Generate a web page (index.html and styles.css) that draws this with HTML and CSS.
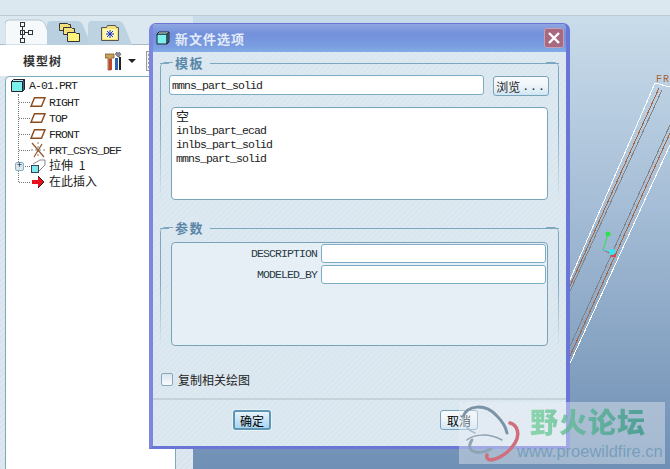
FILE: index.html
```html
<!DOCTYPE html>
<html lang="zh">
<head>
<meta charset="utf-8">
<title>新文件选项</title>
<link rel="stylesheet" href="styles.css">
</head>
<body>
<div class="app">
  <aside class="side">
    <div class="tabs">
      <svg class="tab" width="48" height="26" viewBox="0 0 48 26"><path d="M0 26V5q0-4 4-4h30q4 0 6 4l8 21z" fill="#f6f9fb" stroke="#b4c6d2"/><g fill="none" stroke="#333" stroke-width="1"><rect x="15.500" y="3.500" width="4" height="4"/><rect x="15.500" y="11.500" width="4" height="4"/><rect x="15.500" y="19.500" width="4" height="4"/><rect x="23.500" y="11.500" width="4" height="4"/><path d="M17.500 7.500v12M19.500 13.500h4"/></g></svg>
      <svg class="tab tab2" width="46" height="25" viewBox="0 0 46 25"><path d="M0 25V5q0-4 4-4h26q4 0 6 4l8 20z" fill="#b9d0e0"/><g stroke="#333" fill="#f4df7a"><path d="M12.500 8.500v-5h8l1 1h2v6h-11z"/><path d="M16.500 12.500v-5h8l1 1h2v6h-11z"/><path d="M20.500 16.500v-4h8l1 1h3v8h-12z" fill="#fff27c"/></g></svg>
      <svg class="tab tab3" width="46" height="25" viewBox="0 0 46 25"><path d="M0 25V5q0-4 4-4h26q4 0 6 4l8 20z" fill="#bdd3e2"/><path d="M13.500 20.500v-13h5l1-2h8l1 2h2v13z" fill="#f6e27c" stroke="#555"/><rect x="15" y="9" width="14" height="10" fill="#fff9b0"/><path d="M22 10v8M18 14h8M19 11l6 6M25 11l-6 6" stroke="#1a2fd0"/></svg>
    </div>
    <div class="panel">
      <div class="treehead">
        <span class="treetitle">模型树</span>
        <svg class="tools" width="18" height="20" viewBox="0 0 18 20"><path d="M0 3h9v4H6v12H3V7H0z" fill="#c9a15a" stroke="#6b4a20" stroke-width=".7"/><rect x="4" y="8" width="3" height="11" fill="#c6442e"/><rect x="10" y="7" width="3" height="12" fill="#2b62b8"/><path d="M14 1l2 2-2 3h-1l-3-3 2-2 1 2z" fill="#8a8f96" stroke="#444" stroke-width=".5"/><rect x="14" y="6" width="2" height="13" fill="#222"/></svg>
        <span class="caret"></span>
        <svg class="listbtn" width="11" height="20" viewBox="0 0 11 20"><rect x=".5" y=".5" width="10" height="19" fill="#f3f3ee" stroke="#999"/><path d="M2 4h6M2 8h6M2 12h6M2 16h6" stroke="#444" stroke-dasharray="1 1"/></svg>
      </div>
      <div class="treebox">
        <div class="root">
          <svg class="ico" width="14" height="13" viewBox="0 0 14 13"><path d="M.5 2.500h11v10H.5z" fill="#7ef0ec" stroke="#223"/><path d="M11.500 2.500l2-2v10l-2 2z" fill="#2f6f76" stroke="#223"/><path d="M.5 2.500l2-2h11l-2 2z" fill="#bfeef0" stroke="#223"/></svg>
          <span class="mono">A-01.PRT</span>
        </div>
        <ul class="tree">
          <li class="node"><svg class="ico" width="16" height="10" viewBox="0 0 16 10"><path d="M4.500.8H15l-3.500 8.400H1z" fill="none" stroke="#8d4d22" stroke-width="1.500"/></svg><span class="mono">RIGHT</span></li>
          <li class="node"><svg class="ico" width="16" height="10" viewBox="0 0 16 10"><path d="M4.500.8H15l-3.500 8.400H1z" fill="none" stroke="#8d4d22" stroke-width="1.500"/></svg><span class="mono">TOP</span></li>
          <li class="node"><svg class="ico" width="16" height="10" viewBox="0 0 16 10"><path d="M4.500.8H15l-3.500 8.400H1z" fill="none" stroke="#8d4d22" stroke-width="1.500"/></svg><span class="mono">FRONT</span></li>
          <li class="node"><svg class="ico" width="16" height="16" viewBox="0 0 16 16"><path d="M2 1l12 14M12 2L4 15" stroke="#9a5a30" stroke-width="1.300"/><path d="M8 0v15M1 8h15" stroke="#666" stroke-dasharray="2 2" stroke-width=".8"/></svg><span class="mono">PRT_CSYS_DEF</span></li>
          <li class="node">
            <span class="plus">+</span>
            <svg class="ico" width="16" height="14" viewBox="0 0 16 14"><rect x="1.500" y="6.500" width="7" height="7" fill="#7eeaf0" stroke="#345"/><path d="M3 5l7-4h5v5l-6 6" fill="none" stroke="#888"/></svg><span class="cjk nudge">拉伸 1</span>
          </li>
          <li class="node"><svg class="ico" width="16" height="12" viewBox="0 0 16 12"><path d="M2 4h6V0l6 6-6 6V8H2z" fill="#e8101a"/><path d="M8 0l6 6-6 6" fill="none" stroke="#222"/></svg><span class="cjk nudge">在此插入</span></li>
        </ul>
      </div>
    </div>
  </aside>
  <main class="view">
    <svg class="model" width="477" height="454" viewBox="193 15 477 454">
      <g fill="none" shape-rendering="crispEdges">
        <path d="M655 83L566 289M655 83l15 4M670 145L566 372" stroke="#fff"/>
        <path d="M659 88L566 295M670 133L566 365" stroke="#a8643a"/>
        <path d="M662 90L566 300M670 125L566 355" stroke="#808488"/>
      </g>
      <text x="656" y="82" class="frontlabel">FR</text>
      <path d="M608 234l-5 16" fill="none" stroke="#2de24a"/>
      <path d="M603 250l9 4" fill="none" stroke="#e0304a"/>
      <path d="M603 250l9 2" fill="none" stroke="#35e6ec"/>
      <circle cx="608" cy="234" r="2.500" fill="#2de24a"/>
      <rect x="611" y="254" width="5" height="3" fill="#d64c4c"/>
      <circle cx="612" cy="252" r="3" fill="#35e6ec"/>
    </svg>
  </main>
</div>

<section class="dialog">
  <header class="titlebar">
    <svg class="titleicon" width="14" height="14" viewBox="0 0 14 14"><path d="M1 3h10v10H1z" fill="#7ef0ec" stroke="#223"/><path d="M11 3l2-2v10l-2 2z" fill="#3a7f86" stroke="#223"/><path d="M1 3l2-2h10l-2 2z" fill="#cfe" stroke="#223"/></svg>
    <h1 class="titletext">新文件选项</h1>
    <span class="close"><svg width="12" height="12" viewBox="0 0 12 12"><path d="M1 1l10 10M11 1L1 11" stroke="#fff" stroke-width="2.400"/></svg></span>
  </header>
  <div class="body">
    <fieldset class="group tpl">
      <legend class="legend">模板</legend>
      <div class="pathrow">
        <div class="field wide mono">mmns_part_solid</div>
        <button class="btn browse"><span class="cjk">浏览</span><span class="mono dots">...</span></button>
      </div>
      <div class="list">
        <div class="item cjk">空</div>
        <div class="item mono">inlbs_part_ecad</div>
        <div class="item mono">inlbs_part_solid</div>
        <div class="item mono">mmns_part_solid</div>
      </div>
    </fieldset>
    <fieldset class="group params">
      <legend class="legend">参数</legend>
      <div class="paramsbox">
        <div class="param"><label class="plabel mono">DESCRIPTION</label><div class="field pinput"></div></div>
        <div class="param"><label class="plabel mono">MODELED_BY</label><div class="field pinput"></div></div>
      </div>
    </fieldset>
    <div class="copy"><span class="check"></span><span class="cjk">复制相关绘图</span></div>
    <div class="actions">
      <button class="btn ok cjk">确定</button>
      <button class="btn cancel cjk">取消</button>
    </div>
  </div>
</section>

<div class="wm">
  <svg class="wmlogo" width="62" height="62" viewBox="0 0 62 62"><g fill="none" stroke-linecap="round"><path d="M4 15C8 3 26 1 38 14c6 6 9 12 10 17" stroke="#7a93a6" stroke-width="3"/><path d="M4 15c0 8 6 14 12 16" stroke="#a9bac6" stroke-width="1.500"/><path d="M51 21c8 2 10 12 5 20-5 8-14 15-24 17-3 0-5-2-4-5" stroke="#cf6f7c" stroke-width="3.500"/><path d="M8 38c6-5 20-8 35 0" stroke="#8ea3b3" stroke-width="1.500"/><path d="M13 38c-4 6-3 11 4 12 5 1 11-1 15-3" stroke="#8ea3b3" stroke-width="3"/></g></svg>
  <div class="wmtext">
    <div class="wmcn">野火论坛</div>
    <div class="wmurl">www.proewildfire.cn</div>
  </div>
</div>
</body>
</html>
```
FILE: styles.css
```css
* { box-sizing: border-box; }
html, body { margin: 0; padding: 0; }
body {
  width: 670px; height: 469px; overflow: hidden; position: relative;
  background: #dce8f0;
  font-family: "Noto Sans CJK SC", sans-serif; color: #1a1a1a;
}
.mono { font-family: "Liberation Mono", monospace; font-size: 11.500px; letter-spacing: -.9px; color: #222; }
.cjk { font-family: "Noto Sans CJK SC", sans-serif; font-size: 12px; color: #222; }
.nudge { margin-bottom: 4px; word-spacing: 3px; }

.app { display: flex; height: 469px; padding-top: 15px; }
.side { width: 193px; display: flex; flex-direction: column; }
.tabs {
  height: 30px; display: flex; align-items: flex-end; padding-left: 5px;
  background: #dce8f0; border-top: 1px solid #bcccd6; border-bottom: 1px solid #a9bcc9;
}
.tab { display: block; margin-bottom: -1px; flex: none; }
.tab2 { margin-left: -6px; }
.tab3 { margin-left: -5px; }
.panel {
  flex: 1; display: flex; flex-direction: column;
  background: #fff repeating-linear-gradient(135deg, #dde8f0 0 2px, #d7e4ed 2px 4px);
}
.treehead { height: 31px; display: flex; align-items: center; background: #fff; padding-left: 23px; width: 176px; }
.treetitle { font-size: 12px; font-weight: 700; letter-spacing: 1px; width: 82px; color: #333; }
.tools { flex: none; }
.caret { width: 0; height: 0; border: 4px solid transparent; border-top: 4px solid #222; border-bottom: 0; margin: 0 10px 0 5px; }
.listbtn { flex: none; }
.treebox {
  flex: 1; margin-left: 5px; width: 171px; background: #fff;
  border: 1px solid #80a8bd; border-bottom: 0; border-top-left-radius: 5px; border-top-right-radius: 5px;
  position: relative;
}
.root { height: 17px; display: flex; align-items: center; padding-left: 5px; gap: 4px; }
.tree { list-style: none; margin: 0 0 0 12px; padding: 0; border-left: 1px dotted #777; height: 88px; }
.node { height: 16px; display: flex; align-items: center; position: relative; padding-left: 11px; gap: 3px; }
.node::before { content: ""; position: absolute; left: 0; top: 8px; width: 11px; border-top: 1px dotted #777; }
.ico { flex: none; position: relative; }
.plus {
  position: absolute; left: -4px; top: 4px; width: 9px; height: 9px; z-index: 1;
  background: #d8e8f2; border: 1px solid #8fb0c4; border-radius: 2px;
  font: 9px/7px "Liberation Mono", monospace; text-align: center; color: #111;
}

.view {
  flex: 1; position: relative;
  background: linear-gradient(#c9dcea 0, #a5bdd6 42%, #7c9abc 85%, #7090b5 100%);
  border-top: 1px solid #bcccd6;
}
.model { position: absolute; left: 0; top: -1px; }
.frontlabel { font: 10px "Liberation Mono", monospace; fill: #a8643a; letter-spacing: 1px; }

.dialog {
  position: absolute; left: 149px; top: 23px; width: 421px; height: 426px;
  border: solid #6a76d6; border-width: 1px 4px 3px 4px; border-radius: 7px 7px 0 0;
  border-left-color: #7b87de;
  display: flex; flex-direction: column;
  background: repeating-linear-gradient(135deg, #dde9f1 0 2px, #d9e6ef 2px 4px);
}
.titlebar {
  height: 28px; flex: none; display: flex; align-items: center; padding: 0 2px 0 3px;
  background: linear-gradient(#8ea6e0 0, #7390dc 35%, #7a9de0 80%, #82ace8 100%);
  border-radius: 4px 4px 0 0;
}
.titleicon { flex: none; }
.titletext { margin: 0 0 0 5px; flex: 1; font-size: 13px; font-weight: 700; letter-spacing: 1px; color: #e2ebf8; }
.close {
  width: 20px; height: 20px; display: flex; align-items: center; justify-content: center;
  background: #a8687f; border: 1px solid #c6a0b6; border-radius: 3px;
}
.body { flex: 1; padding: 3px 7px 0; display: flex; flex-direction: column; }
.group {
  margin: 0; padding: 0; min-width: 0; width: 399px; position: relative;
  border: 0; border-top: 1px solid #7da7c0;
}
.group::before, .group::after {
  content: ""; position: absolute; top: -9px; bottom: 0; width: 12px;
  border-top: 1px solid #7da7c0;
  -webkit-mask-image: linear-gradient(#000 45%, transparent);
  mask-image: linear-gradient(#000 45%, transparent);
}
.group::before { left: 0; border-left: 1px solid #7da7c0; border-top-left-radius: 5px; }
.group::after { right: 0; border-right: 1px solid #7da7c0; border-top-right-radius: 5px; }
.tpl { height: 157px; }
.params { height: 132px; margin-top: 8px; }
.legend { margin-left: 9px; padding: 0 6px; font-size: 13px; line-height: 16px; font-weight: 700; letter-spacing: 1.500px; color: #5a86a8; }
.pathrow { display: flex; padding: 4px 0 0 9px; gap: 9px; }
.field { background: #fff; border: 1px solid #7dacc4; border-radius: 3px; height: 20px; display: flex; align-items: center; padding-left: 2px; }
.wide { width: 315px; }
.btn {
  padding: 0; height: 20px; border: 1px solid #7aa2b8; border-radius: 3px;
  background: linear-gradient(#f8fbfd, #eef5fa 50%, #cfe6f5);
  display: flex; align-items: center; justify-content: center;
}
.browse { width: 56px; margin-top: 1px; }
.dots { letter-spacing: 1px; margin-left: 2px; }
.list {
  margin: 11px 0 0 11px; width: 377px; height: 93px; background: #fff;
  border: 1px solid #7ba3b8; border-radius: 4px; padding: 1px 4px;
}
.item { height: 14px; line-height: 14px; display: block; }
.item.cjk { height: 15px; font-size: 13px; }
.paramsbox {
  margin: 6px 0 0 11px; width: 377px; height: 104px; background: #e6eff6;
  border: 1px solid #7ba3b8; border-radius: 4px; padding: 1px;
  display: flex; flex-direction: column; gap: 2px;
}
.param { display: flex; align-items: center; justify-content: flex-end; gap: 4px; }
.plabel { color: #2a3a44; }
.pinput { width: 225px; height: 19px; }
.copy { display: flex; align-items: center; gap: 5px; margin: 21px 0 0 1px; height: 13px; }
.check { width: 12px; height: 13px; background: linear-gradient(#dce6ee, #f7fafc); border: 1px solid #8aa8bc; border-radius: 2px; }
.actions {
  margin: 12px -7px 0; height: 48px; border-top: 2px solid #c5d2da;
  display: flex; padding: 10px 0 0 80px; gap: 169px; align-items: flex-start;
}
.ok { width: 38px; height: 20px; border: 2px solid #5e96b4; box-shadow: 0 0 0 1px #e8f2f8; background: linear-gradient(#e8f3fa, #a7d4f0); color: #000; }
.cancel { width: 38px; height: 20px; color: #000; }

.wm {
  position: absolute; left: 459px; top: 402px; width: 206px; height: 62px;
  background: rgba(235, 240, 245, .42);
  display: flex;
}
.wmlogo { flex: none; }
.wmtext { padding-left: 2px; }
.wmcn {
  margin: 2px 0 0 7px; font-size: 28px; line-height: 34px; font-weight: 900; letter-spacing: 1px; white-space: nowrap;
  background: linear-gradient(90deg, rgba(110, 205, 150, .75), rgba(40, 140, 125, .75));
  -webkit-background-clip: text; background-clip: text; color: transparent;
}
.wmurl { margin-top: 4px; margin-left: -6px; font: 16.500px/18px "Liberation Sans", sans-serif; color: rgba(80, 135, 170, .55); white-space: nowrap; }
```
